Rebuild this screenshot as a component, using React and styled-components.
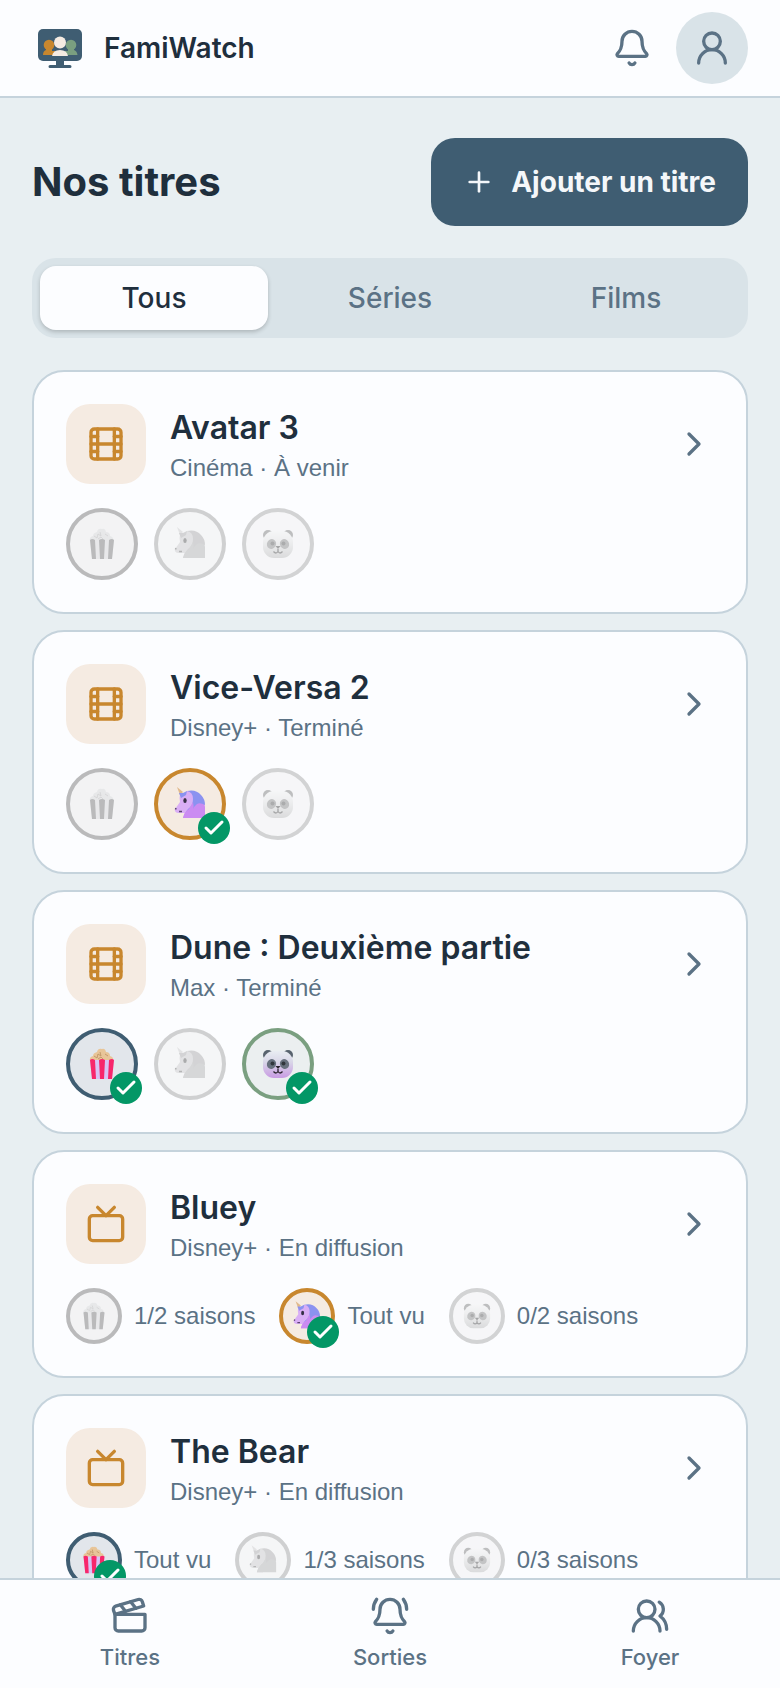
import React from "react";
import styled, { createGlobalStyle } from "styled-components";
import {
  Bell,
  BellRing,
  Check,
  ChevronRight,
  Clapperboard,
  Film,
  Plus,
  Tv,
  UserRound,
  UsersRound,
} from "lucide-react";

const GlobalStyle = createGlobalStyle`
  * {
    box-sizing: border-box;
  }
  body {
    margin: 0;
    background: #e8eff2;
    color: #1f2f3d;
    font-family: Inter, "Liberation Sans", sans-serif;
  }
  button {
    font-family: inherit;
    border: none;
    cursor: pointer;
  }
`

const Page = styled.div`
  height: 100vh;
  display: flex;
  flex-direction: column;
`
const Header = styled.header`
  flex: none;
  display: flex;
  align-items: center;
  justify-content: space-between;
  padding: 12px 32px;
  background: #fcfdff;
  border-bottom: 2px solid #c5d3dc;
`
const Brand = styled.a`
  display: flex;
  align-items: center;
  gap: 16px;
  color: #1f2f3d;
  font-size: 28px;
  font-weight: 600;
  line-height: 40px;
  text-decoration: none;
`
const Actions = styled.div`
  display: flex;
  align-items: center;
  gap: 8px;
`
const RoundButton = styled.button`
  width: 72px;
  height: 72px;
  padding: 0;
  display: flex;
  align-items: center;
  justify-content: center;
  border-radius: 50%;
  color: #5b7285;
  background: ${(props) => (props.$filled ? '#d9e3e8' : 'transparent')};
`
const Main = styled.main`
  flex: 1;
  min-height: 0;
  overflow: hidden;
  padding: 40px 32px 0;
`
const TitleRow = styled.div`
  display: flex;
  align-items: center;
  justify-content: space-between;
  margin-bottom: 32px;
`
const Heading = styled.h1`
  margin: 0;
  font-size: 40px;
  font-weight: 700;
  line-height: 48px;
`
const AddButton = styled.button`
  height: 88px;
  padding: 0 32px;
  display: flex;
  align-items: center;
  gap: 16px;
  border-radius: 24px;
  background: #3f5d72;
  color: #f4f7fa;
  font-size: 28px;
  font-weight: 700;
`
const Tabs = styled.div`
  display: grid;
  grid-template-columns: repeat(3, 1fr);
  gap: 8px;
  padding: 8px;
  margin-bottom: 32px;
  border-radius: 24px;
  background: #d9e3e8;
`
const Tab = styled.button`
  height: 64px;
  border-radius: 16px;
  font-size: 28px;
  font-weight: 500;
  color: ${(props) => (props.$active ? '#1f2f3d' : '#5b7285')};
  background: ${(props) => (props.$active ? '#fcfdff' : 'transparent')};
  box-shadow: ${(props) => (props.$active ? '0 2px 4px rgba(0, 0, 0, 0.2)' : 'none')};
`
const List = styled.ul`
  margin: 0;
  padding: 0;
  list-style: none;
  display: flex;
  flex-direction: column;
  gap: 16px;
`
const Card = styled.li`
  padding: 32px;
  display: flex;
  flex-direction: column;
  gap: 24px;
  border: 2px solid #c5d3dc;
  border-radius: 32px;
  background: #fcfdff;
`
const CardLink = styled.a`
  display: flex;
  align-items: center;
  gap: 24px;
  color: #5b7285;
  text-decoration: none;
`
const Thumb = styled.span`
  flex: none;
  width: 80px;
  height: 80px;
  display: flex;
  align-items: center;
  justify-content: center;
  border-radius: 24px;
  background: #f5ebe2;
  color: #c8872e;
`
const CardText = styled.div`
  flex: 1;
  min-width: 0;
`
const CardTitle = styled.h2`
  margin: 0;
  color: #1f2f3d;
  font-size: 32px;
  font-weight: 600;
  line-height: 48px;
`
const CardMeta = styled.p`
  margin: 0;
  font-family: "Liberation Sans", sans-serif;
  font-size: 24px;
  line-height: 32px;
`
const Members = styled.div`
  display: flex;
  gap: ${(props) => (props.$series ? '24px' : '16px')};
`
const Member = styled.div`
  display: flex;
  align-items: center;
  gap: 12px;
  color: #5b7285;
  font-family: "Liberation Sans", sans-serif;
  font-size: 24px;
`
const AvatarWrap = styled.span`
  position: relative;
  display: flex;
`
const Avatar = styled.span`
  width: ${(props) => (props.$small ? 56 : 72)}px;
  height: ${(props) => (props.$small ? 56 : 72)}px;
  display: flex;
  align-items: center;
  justify-content: center;
  border: 4px solid ${(props) => props.$ring};
  border-radius: 50%;
  background: ${(props) => props.$fill};
  ${(props) => (props.$seen ? '' : 'filter: grayscale(1); opacity: 0.4;')}
`
const SeenBadge = styled.span`
  position: absolute;
  right: -4px;
  bottom: -4px;
  width: 32px;
  height: 32px;
  display: flex;
  align-items: center;
  justify-content: center;
  border-radius: 50%;
  background: #039766;
  color: #fff;
`
const BottomNav = styled.nav`
  flex: none;
  display: grid;
  grid-template-columns: repeat(3, 1fr);
  height: 110px;
  background: #fcfdff;
  border-top: 2px solid #c5d3dc;
`
const NavLink = styled.a`
  display: flex;
  flex-direction: column;
  align-items: center;
  gap: 5px;
  padding-top: 16px;
  color: #5b7285;
  font-size: 22px;
  font-weight: 500;
  line-height: 32px;
  text-decoration: none;
`

function Logo() {
  return (
    <svg width="56" height="56" viewBox="0 0 56 56" aria-hidden="true">
      <rect x="6" y="9" width="44" height="32" rx="5" fill="#3f5d72" />
      <path d="M24 41h8v4h6a1.500 1.500 0 0 1 0 3H18a1.500 1.500 0 0 1 0-3h6z" fill="#3f5d72" />
      <g fill="#c8872e">
        <circle cx="17" cy="25" r="5.300" />
        <path d="M14 27h6v4h3v4H11q0-4 3-5z" />
      </g>
      <g fill="#7a9f80">
        <circle cx="39" cy="25" r="5.300" />
        <path d="M36 27h6v3q3 1 3.500 5H33v-4h3z" />
      </g>
      <g fill="#f5ebe2">
        <circle cx="28" cy="22.500" r="6" />
        <path d="M20 36q1-6 8-6t8 6z" />
      </g>
    </svg>
  )
}

function Popcorn({ size }) {
  return (
    <svg width={size} height={size} viewBox="0 0 32 32" aria-hidden="true">
      <path
        d="M4 13q-1-4 3-5 0-3 4-4 1-4 5-3 3-1 4 3 4 0 4 4 4 1 3 5z"
        fill="#e8c598"
      />
      <path
        d="M8 8l3 2 1-4 3 2-1-4m5 2l3 2m-10 3l3-2 2 2"
        fill="none"
        stroke="#c39a6b"
        strokeWidth="1"
      />
      <path d="M4 12h24l-2 19H6z" fill="#d8c3f5" />
      <path
        d="M4 12q2-2 5 0l1 19H6zM13 12q3-2 6 0l-1 19h-4zM23 12q3-2 5 0l-2 19h-4z"
        fill="#f7276b"
      />
    </svg>
  )
}

function Unicorn({ size }) {
  return (
    <svg width={size} height={size} viewBox="0 0 32 32" overflow="visible" aria-hidden="true">
      <path d="M3-1l6 5-3 3z" fill="#e0b98c" />
      <path d="M18 8l10 2q3 4 3 9v11H9l4-10z" fill="#cb8bf2" />
      <path d="M13 3q9-2 14 4 4 4 4 10-5-3-8-1-4 3-5 7l-2 5-5-6z" fill="#8b92f0" />
      <path d="M6 7q4-1 7-4 6 1 6 8t-5 10l-3 4H4q-4-1-3-4l5-7q-1-4 0-7z" fill="#d9aef5" />
      <path d="M9 30q1-6 6-9l4-7q2 8-3 16z" fill="#cb8bf2" />
      <path d="M5 5l2 5 5-3 1-4-4 2z" fill="#8b92f0" />
      <ellipse cx="11" cy="12.500" rx="1.700" ry="2.500" fill="#352f45" />
      <path d="M1 20.500l1.500.500m2.500 2.500h3" stroke="#5c4470" strokeWidth="1.500" />
    </svg>
  )
}

function Panda({ size }) {
  return (
    <svg width={size} height={size} viewBox="0 0 32 32" aria-hidden="true">
      <defs>
        <linearGradient id="panda-face" x1="0" y1="0" x2="0" y2="1">
          <stop offset="0" stopColor="#e9edf2" />
          <stop offset="0.400" stopColor="#d9d7e8" />
          <stop offset="1" stopColor="#c89be3" />
        </linearGradient>
      </defs>
      <circle cx="6" cy="7" r="5" fill="#58636e" />
      <circle cx="26" cy="7" r="5" fill="#58636e" />
      <rect x="1" y="3" width="30" height="27" rx="11" fill="url(#panda-face)" />
      <ellipse cx="9.500" cy="16" rx="4.500" ry="5" transform="rotate(30 9.500 16)" fill="#68717e" />
      <ellipse cx="22.500" cy="16" rx="4.500" ry="5" transform="rotate(-30 22.500 16)" fill="#68717e" />
      <circle cx="10.500" cy="15.500" r="2" fill="#30363c" />
      <circle cx="21.500" cy="15.500" r="2" fill="#30363c" />
      <path d="M13.500 18h5L16 21z" fill="#29232d" />
      <path d="M16 21v2.500q-2 3-4.500 0m4.500 0q2 3 4.500 0" fill="none" stroke="#29232d" strokeWidth="1.300" />
    </svg>
  )
}

const members = [
  { id: 'popcorn', Emoji: Popcorn, ring: '#3f5d72', fill: '#e2e6eb' },
  { id: 'unicorn', Emoji: Unicorn, ring: '#c8872e', fill: '#f5ebe2' },
  { id: 'panda', Emoji: Panda, ring: '#7a9f80', fill: '#ebeff0' },
]

const titles = [
  { name: 'Avatar 3', meta: 'Cinéma · À venir', seen: [false, false, false] },
  { name: 'Vice-Versa 2', meta: 'Disney+ · Terminé', seen: [false, true, false] },
  { name: 'Dune : Deuxième partie', meta: 'Max · Terminé', seen: [true, false, true] },
  {
    name: 'Bluey',
    meta: 'Disney+ · En diffusion',
    seen: [false, true, false],
    progress: ['1/2 saisons', 'Tout vu', '0/2 saisons'],
  },
  {
    name: 'The Bear',
    meta: 'Disney+ · En diffusion',
    seen: [true, false, false],
    progress: ['Tout vu', '1/3 saisons', '0/3 saisons'],
  },
]

function TitleCard({ title }) {
  const { name, meta, seen, progress } = title;
  const Icon = progress ? Tv : Film;

  return (
    <Card>
      <CardLink href="#">
        <Thumb><Icon size={40} /></Thumb>
        <CardText>
          <CardTitle>{name}</CardTitle>
          <CardMeta>{meta}</CardMeta>
        </CardText>
        <ChevronRight size={40} />
      </CardLink>
      <Members $series={!!progress}>
        {members.map(({ id, Emoji, ring, fill }, i) => (
          <Member key={id}>
            <AvatarWrap>
              <Avatar $small={!!progress} $ring={ring} $fill={fill} $seen={seen[i]}>
                <Emoji size={progress ? 28 : 32} />
              </Avatar>
              {seen[i] ? <SeenBadge><Check size={24} strokeWidth={3} /></SeenBadge> : null}
            </AvatarWrap>
            {progress ? <span>{progress[i]}</span> : null}
          </Member>
        ))}
      </Members>
    </Card>
  )
}

function App() {
  const [tab, setTab] = React.useState('Tous');

  return (
    <Page>
      <GlobalStyle />
      <Header>
        <Brand href="#">
          <Logo />
          FamiWatch
        </Brand>
        <Actions>
          <RoundButton aria-label="Notifications"><Bell size={40} /></RoundButton>
          <RoundButton $filled aria-label="Profil"><UserRound size={40} /></RoundButton>
        </Actions>
      </Header>
      <Main>
        <TitleRow>
          <Heading>Nos titres</Heading>
          <AddButton>
            <Plus size={32} />
            Ajouter un titre
          </AddButton>
        </TitleRow>
        <Tabs>
          {['Tous', 'Séries', 'Films'].map((label) => (
            <Tab key={label} $active={tab === label} onClick={() => setTab(label)}>
              {label}
            </Tab>
          ))}
        </Tabs>
        <List>
          {titles.map((title) => (
            <TitleCard key={title.name} title={title} />
          ))}
        </List>
      </Main>
      <BottomNav>
        <NavLink href="#"><Clapperboard size={40} />Titres</NavLink>
        <NavLink href="#"><BellRing size={40} />Sorties</NavLink>
        <NavLink href="#"><UsersRound size={40} />Foyer</NavLink>
      </BottomNav>
    </Page>
  )
}

export default App;
